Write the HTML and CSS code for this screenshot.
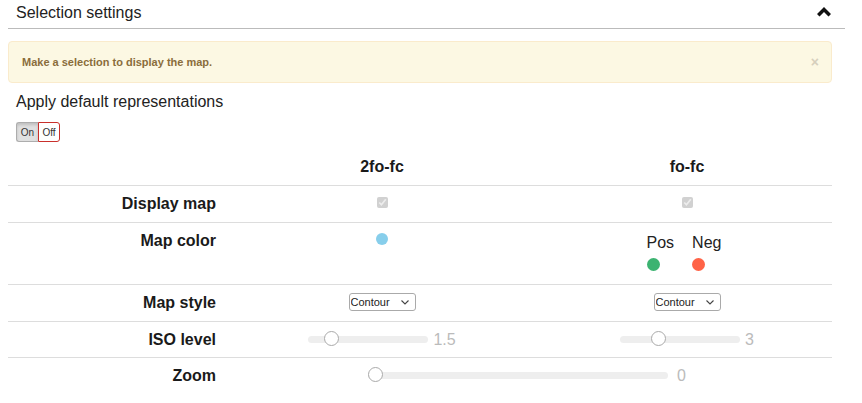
FILE: index.html
```html
<!DOCTYPE html>
<html>
<head>
<meta charset="utf-8">
<link rel="stylesheet" href="styles.css">
</head>
<body>
<div class="panel">
  <div class="panel-head">
    <span class="title">Selection settings</span>
    <svg class="chev" width="14" height="10" viewBox="0 0 14 10"><path d="M7 0 L14 7 L11.5 9.5 L7 5 L2.5 9.5 L0 7 Z" fill="#111"/></svg>
  </div>
  <div class="content">
    <div class="alert">
      <span class="alert-text">Make a selection to display the map.</span>
      <span class="close">×</span>
    </div>
    <div class="apply">Apply default representations</div>
    <div class="toggle"><span class="t-on">On</span><span class="t-off">Off</span></div>
    <table class="grid">
      <colgroup><col class="c1"><col class="c2"><col class="c3"></colgroup>
      <tr class="hrow"><th></th><th>2fo-fc</th><th>fo-fc</th></tr>
      <tr><th class="lbl">Display map</th><td><input type="checkbox" class="cb" checked disabled></td><td><input type="checkbox" class="cb" checked disabled></td></tr>
      <tr><th class="lbl">Map color</th>
        <td><span class="dot dot-blue"></span></td>
        <td><div class="pn"><div class="pn-item"><span>Pos</span><span class="dot2 dot-green"></span></div><div class="pn-item"><span>Neg</span><span class="dot2 dot-red"></span></div></div></td>
      </tr>
      <tr><th class="lbl">Map style</th>
        <td><span class="selwrap"><select class="sel"><option>Contour</option></select><svg class="selarrow" width="8" height="5" viewBox="0 0 8 5"><path d="M0.5 0.5 L4 4 L7.5 0.5" fill="none" stroke="#444" stroke-width="1.1"/></svg></span></td>
        <td><span class="selwrap"><select class="sel"><option>Contour</option></select><svg class="selarrow" width="8" height="5" viewBox="0 0 8 5"><path d="M0.5 0.5 L4 4 L7.5 0.5" fill="none" stroke="#444" stroke-width="1.1"/></svg></span></td>
      </tr>
      <tr class="iso"><th class="lbl">ISO level</th>
        <td><div class="slider"><div class="track t120"><span class="thumb" style="left:16px"></span></div><span class="val">1.5</span></div></td>
        <td><div class="slider"><div class="track t120"><span class="thumb" style="left:31px"></span></div><span class="val">3</span></div></td>
      </tr>
      <tr class="last"><th class="lbl">Zoom</th>
        <td colspan="2"><div class="slider zs"><div class="track t300"><span class="thumb" style="left:0px"></span></div><span class="val">0</span></div></td>
      </tr>
    </table>
  </div>
</div>
</body>
</html>
```
FILE: styles.css
```css
html, body { margin: 0; padding: 0; background: #fff; }
body { padding: 0 8px; font-family: "Liberation Sans", Arial, sans-serif; color: #222; }
.panel { width: 837px; }
.panel-head {
  height: 29px;
  border-bottom: 1px solid #bbb;
  display: flex;
  align-items: center;
  justify-content: space-between;
  padding: 0 14px 0 8px;
  box-sizing: border-box;
}
.title { font-size: 16px; line-height: 20px; margin-top: -3px; }
.chev { margin-top: -5px; }
.content { width: 824px; }
.alert {
  margin-top: 12px;
  height: 42px;
  box-sizing: border-box;
  background: #fcf8e3;
  border: 1px solid #faebcc;
  border-radius: 4px;
  display: flex;
  align-items: center;
  justify-content: space-between;
  padding: 0 12px 0 13px;
}
.alert-text { font-size: 11px; font-weight: bold; color: #8a6d3b; }
.close { font-size: 14px; font-weight: bold; color: #d6cfbd; }
.apply { font-size: 16px; line-height: 20px; margin-top: 9px; padding-left: 8px; }
.toggle {
  margin: 10px 0 0 8px;
  display: inline-flex;
  height: 20px;
  font-size: 10px;
}
.t-on {
  width: 22px;
  box-sizing: border-box;
  background: #e0e0e0;
  border: 1px solid #adadad;
  border-right: none;
  border-radius: 3px 0 0 3px;
  box-shadow: inset 0 2px 3px rgba(0,0,0,0.15);
  color: #333;
  display: flex; align-items: center; justify-content: center;
}
.t-off {
  width: 22px;
  box-sizing: border-box;
  background: #fff;
  border: 1px solid #c9302c;
  border-radius: 0 3px 3px 0;
  color: #333;
  display: flex; align-items: center; justify-content: center;
}
.grid {
  margin-top: 7px;
  width: 824px;
  border-collapse: collapse;
  table-layout: fixed;
  font-size: 16px;
  line-height: 20px;
}
.c1 { width: 214px; }
.c2 { width: 320px; }
.c3 { width: 290px; }
.grid th, .grid td { padding: 8px; vertical-align: top; text-align: center; }
.grid tr { border-top: 1px solid #ddd; }
.grid tr.hrow { border-top: none; }
.grid tr.iso th, .grid tr.iso td { padding-bottom: 7px; }
.grid th { font-weight: bold; color: #1a1a1a; }
.grid th.lbl { text-align: right; padding-right: 6px; }
.cb { width: 11px; height: 11px; margin: 3px 0 0 0; vertical-align: top; }
.dot { display: inline-block; width: 12px; height: 12px; border-radius: 50%; margin-top: 2px; vertical-align: top; }
.dot-blue { background: #87ceeb; }
.pn { display: inline-flex; gap: 18px; margin: 2px 6px 5px 0; }
.pn-item { display: flex; flex-direction: column; align-items: flex-start; }
.dot2 { display: block; width: 13px; height: 13px; border-radius: 50%; margin-top: 5px; }
.dot-green { background: #3cb371; }
.dot-red { background: #ff6347; }
.selwrap { position: relative; display: inline-block; vertical-align: top; height: 18px; }
.sel {
  -webkit-appearance: none;
  appearance: none;
  font-family: "Liberation Sans", Arial, sans-serif;
  font-size: 11px;
  line-height: 16px;
  height: 18px;
  width: 67px;
  padding: 0 0 0 1px;
  border: 1px solid #aaa;
  border-radius: 3px;
  background: #fff;
  color: #222;
  display: block;
}
.selarrow { position: absolute; right: 7px; top: 7px; pointer-events: none; }
.slider { display: inline-flex; align-items: center; gap: 5px; height: 19px; vertical-align: top; }
.track { position: relative; height: 7px; background: #eee; border-radius: 4px; }
.t120 { width: 120px; }
.t300 { width: 300px; }
.thumb {
  position: absolute;
  top: -5px;
  width: 15px; height: 15px;
  box-sizing: border-box;
  border-radius: 50%;
  background: #fff;
  border: 1px solid #aaa;
}
.val { color: #bbb; font-size: 16px; }
.zs { gap: 9px; }
```
